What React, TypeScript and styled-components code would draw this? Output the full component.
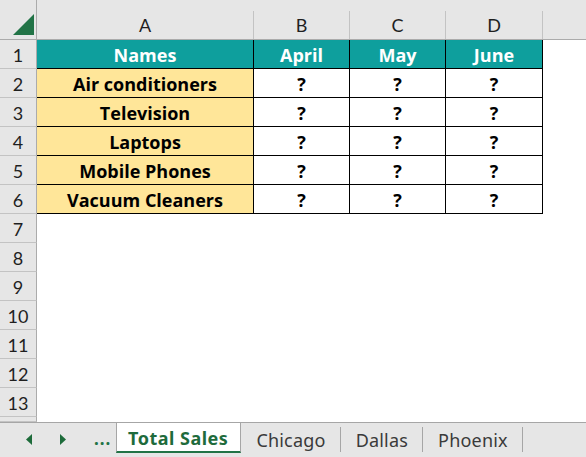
import React from "react";
import styled, { createGlobalStyle } from "styled-components";

const GRID_GRAY = "#e6e6e6";
const LINE = "#c3c3c3";
const TEAL = "#0e9f9d";
const GOLD = "#ffe699";
const EXCEL_GREEN = "#217346";

const GlobalStyle = createGlobalStyle`
    html, body {
        margin: 0;
        padding: 0;
        background: #ffffff;
    }
    body {
        width: 586px;
        height: 457px;
        overflow: hidden;
        font-family: Lato, "Liberation Sans", sans-serif;
    }
`;

const Window = styled.div`
    width: 586px;
    height: 457px;
    display: flex;
    flex-direction: column;
    overflow: hidden;
`;

const Sheet = styled.div`
    display: grid;
    grid-template-columns: 37px 217px 96px 96px 97px 1fr;
    grid-template-rows: 40px repeat(13, 29px) 5px;
    color: #000;
`;

const Corner = styled.div`
    background: ${GRID_GRAY};
    border-right: 1px solid #ababab;
    border-bottom: 1px solid #ababab;
    box-sizing: border-box;
    display: flex;
    align-items: flex-end;
    justify-content: flex-end;
    padding: 0 2px 4px 0;

    svg {
        display: block;
    }
`;

const ColHeader = styled.div`
    background: ${GRID_GRAY};
    border-bottom: 1px solid #ababab;
    box-sizing: border-box;
    padding-top: 11px;
`;

const ColLabel = styled.div<{ $last?: boolean }>`
    height: 100%;
    box-sizing: border-box;
    border-right: ${(p) => (p.$last ? "none" : `1px solid ${LINE}`)};
    display: flex;
    align-items: center;
    justify-content: center;
    font-size: 18px;
    color: #1f1f1f;
    padding-bottom: 1px;
`;

const RowHeader = styled.div`
    background: ${GRID_GRAY};
    border-right: 1px solid #ababab;
    border-bottom: 1px solid ${LINE};
    box-sizing: border-box;
    display: flex;
    align-items: center;
    justify-content: center;
    font-size: 18px;
    color: #1f1f1f;
    padding-top: 2px;
`;

type CellKind = "head" | "name" | "value" | "blank";

const Cell = styled.div<{ $kind: CellKind }>`
    box-sizing: border-box;
    display: flex;
    align-items: center;
    justify-content: center;
    padding-top: 1px;
    font-family: "Open Sans", "Noto Sans", sans-serif;
    font-size: 18px;
    font-weight: 700;
    white-space: nowrap;
    background: ${(p) =>
        p.$kind === "head" ? TEAL : p.$kind === "name" ? GOLD : "#ffffff"};
    color: ${(p) => (p.$kind === "head" ? "#ffffff" : "#000000")};
    border-right: ${(p) => (p.$kind === "blank" ? "none" : "1px solid #000")};
    border-bottom: ${(p) => (p.$kind === "blank" ? "none" : "1px solid #000")};
`;

const TabBar = styled.div`
    height: 35px;
    box-sizing: border-box;
    border-top: 1px solid #a6a6a6;
    background: ${GRID_GRAY};
    display: flex;
    align-items: flex-start;
    font-family: "Noto Sans", "Open Sans", sans-serif;
    font-size: 18px;
`;

const Nav = styled.div`
    width: 116px;
    height: 30px;
    display: flex;
    align-items: center;
    padding-left: 26px;
    box-sizing: border-box;
`;

const NavArrow = styled.span`
    width: 34px;
    display: flex;
    align-items: center;
    padding-top: 2px;

    svg {
        display: block;
    }
`;

const Ellipsis = styled.span`
    color: ${EXCEL_GREEN};
    font-weight: 700;
    font-size: 17px;
    letter-spacing: 1px;
    padding-top: 1px;
`;

const Tab = styled.div<{ $active?: boolean }>`
    height: ${(p) => (p.$active ? "30px" : "25px")};
    margin-top: ${(p) => (p.$active ? "0" : "4px")};
    box-sizing: border-box;
    display: flex;
    align-items: center;
    padding: ${(p) => (p.$active ? "2px 12px 0 11px" : "0 14px 0 15px")};
    letter-spacing: ${(p) => (p.$active ? "0.5px" : "0.2px")};
    background: ${(p) => (p.$active ? "#ffffff" : "transparent")};
    color: ${(p) => (p.$active ? "#1e6b3c" : "#3a3a3a")};
    font-weight: ${(p) => (p.$active ? 700 : 400)};
    border-left: ${(p) => (p.$active ? "1px solid #a6a6a6" : "none")};
    border-right: 1px solid #a6a6a6;
    border-bottom: ${(p) => (p.$active ? `2px solid ${EXCEL_GREEN}` : "none")};
`;

const months = ["April", "May", "June"];
const products = [
    "Air conditioners",
    "Television",
    "Laptops",
    "Mobile Phones",
    "Vacuum Cleaners",
];

function Triangle({ dir }: { dir: "left" | "right" }) {
    const points = dir === "left" ? "6,0 6,11 0,5.5" : "0,0 0,11 6,5.5";
    return (
        <svg width="6" height="11" viewBox="0 0 6 11">
            <polygon points={points} fill="#1d6b3a" />
        </svg>
    );
}

export default function App() {
    const rows: { kinds: CellKind[]; values: string[] }[] = [
        { kinds: ["head", "head", "head", "head", "blank"], values: ["Names", ...months, ""] },
        ...products.map((name) => ({
            kinds: ["name", "value", "value", "value", "blank"] as CellKind[],
            values: [name, "?", "?", "?", ""],
        })),
    ];
    while (rows.length < 13) {
        rows.push({ kinds: ["blank", "blank", "blank", "blank", "blank"], values: ["", "", "", "", ""] });
    }

    return (
        <Window>
            <GlobalStyle />
            <Sheet>
                <Corner>
                    <svg width="21" height="21" viewBox="0 0 21 21">
                        <polygon points="0,21 21,0 21,21" fill={EXCEL_GREEN} />
                    </svg>
                </Corner>
                {["A", "B", "C", "D", ""].map((letter, i) => (
                    <ColHeader key={i}>
                        <ColLabel $last={i === 4}>{letter}</ColLabel>
                    </ColHeader>
                ))}
                {rows.map((row, r) => (
                    <React.Fragment key={r}>
                        <RowHeader>{r + 1}</RowHeader>
                        {row.values.map((v, c) => (
                            <Cell key={c} $kind={row.kinds[c]}>
                                {v}
                            </Cell>
                        ))}
                    </React.Fragment>
                ))}
                <RowHeader />
                <Cell $kind="blank" style={{ gridColumn: "2 / -1" }} />
            </Sheet>
            <TabBar>
                <Nav>
                    <NavArrow>
                        <Triangle dir="left" />
                    </NavArrow>
                    <NavArrow>
                        <Triangle dir="right" />
                    </NavArrow>
                    <Ellipsis>...</Ellipsis>
                </Nav>
                <Tab $active>Total Sales</Tab>
                <Tab>Chicago</Tab>
                <Tab>Dallas</Tab>
                <Tab>Phoenix</Tab>
            </TabBar>
        </Window>
    );
}
